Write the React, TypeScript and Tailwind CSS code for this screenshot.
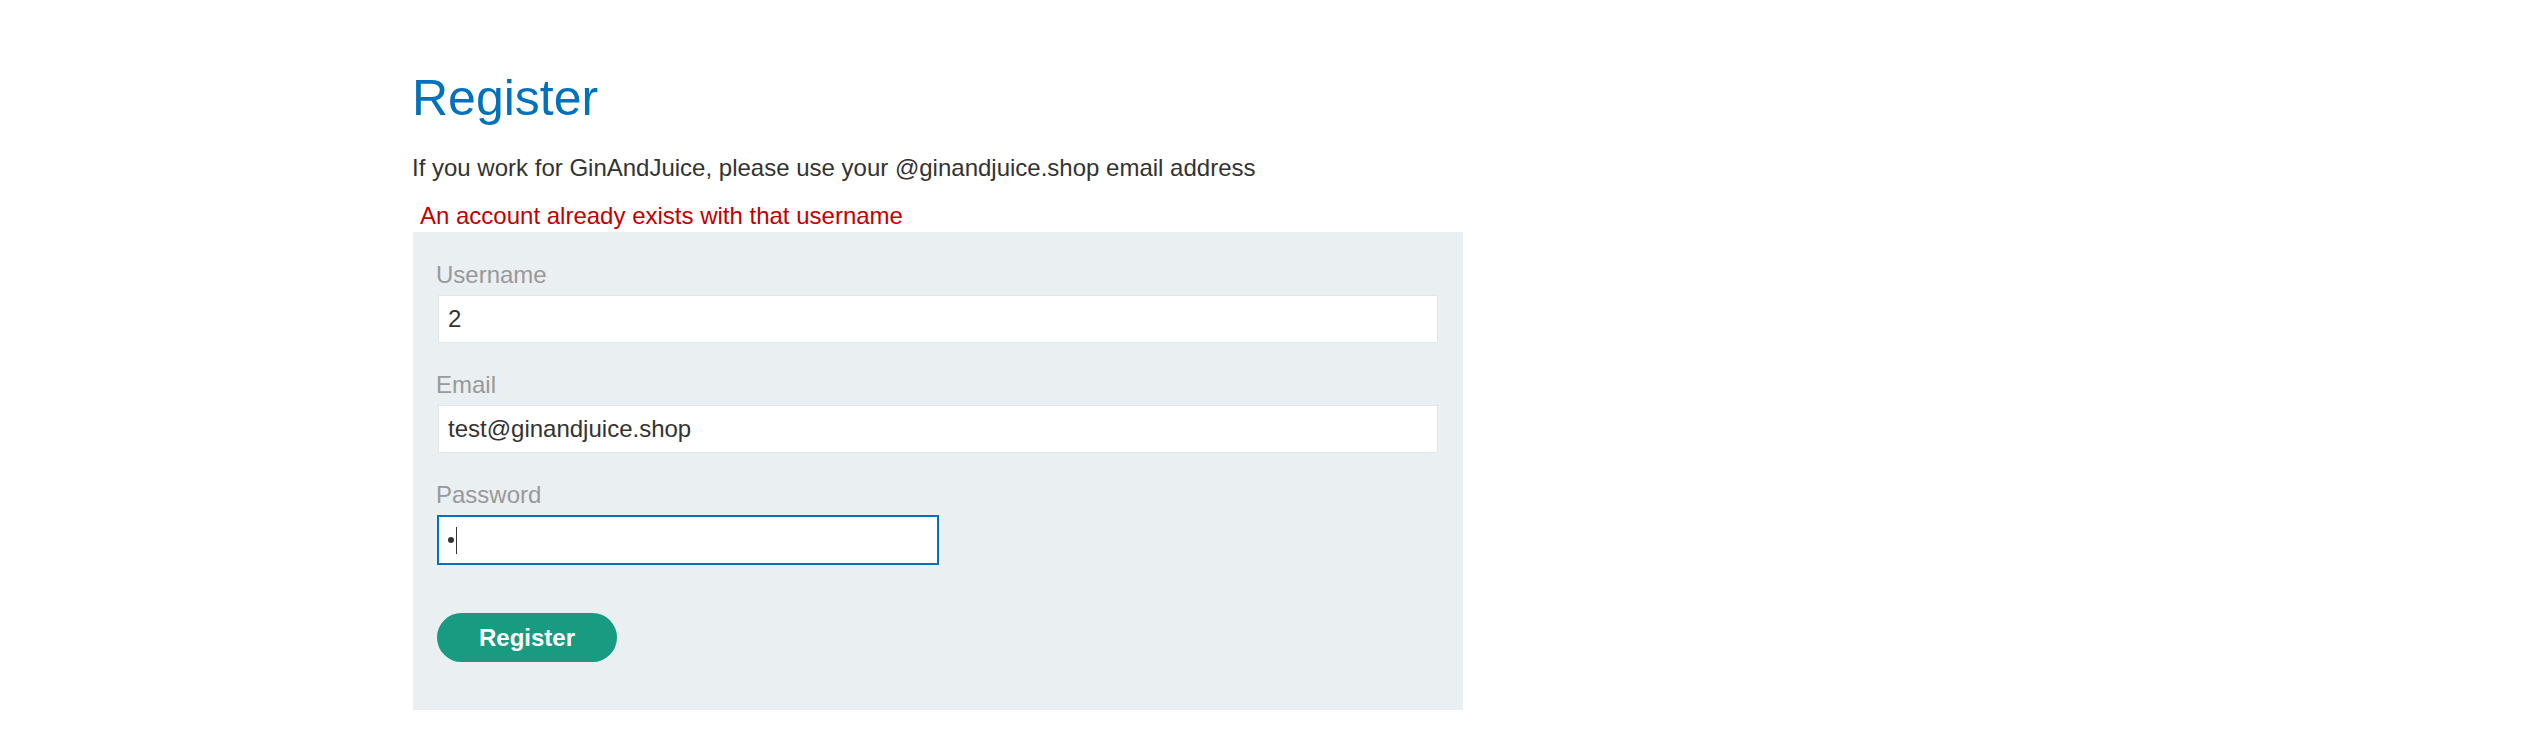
import React from 'react';

const font = { fontFamily: '"Liberation Sans", Arial, sans-serif' };

function Field({ label, value }: { label: string; value: string }) {
  return (
    <div>
      <label className="block text-[24px] leading-[30px] text-[#999999]">{label}</label>
      <div className="mt-[5px] ml-[2px] flex h-[48px] w-[1000px] items-center border border-[#e3e6e8] bg-white pl-[9px] text-[24px] text-[#333332]">
        {value}
      </div>
    </div>
  );
}

export default function App() {
  return (
    <div className="min-h-[755px] w-full bg-white" style={font}>
      <div className="mx-auto w-[1702px] pt-[70px]">
        {/* Heading */}
        <h1 className="text-[50px] leading-[56px] font-normal text-[#0071bc]">Register</h1>
        <p className="mt-[27px] text-[24px] leading-[30px] text-[#333332]">
          If you work for GinAndJuice, please use your @ginandjuice.shop email address
        </p>
        <p className="mt-[18px] ml-[8px] text-[24px] leading-[30px] text-[#c20000]">
          An account already exists with that username
        </p>

        {/* Form panel */}
        <form className="mt-[1px] ml-[1px] w-[1050px] bg-[#eaeff2] pt-[28px] pl-[23px] pb-[48px]">
          <div className="flex flex-col gap-[27px]">
            <Field label="Username" value="2" />
            <Field label="Email" value="test@ginandjuice.shop" />
            <div>
              <label className="block text-[24px] leading-[30px] text-[#999999]">Password</label>
              <div className="mt-[6px] ml-[2px] flex h-[48px] w-[500px] items-center border border-[#0071bc] bg-white pl-[9px] ring-1 ring-[#0071bc]">
                <span className="h-[6px] w-[6px] rounded-full bg-[#333332]" />
                <span className="ml-[2px] h-[27px] w-px bg-[#333332]" />
              </div>
            </div>
          </div>
          <button
            type="button"
            className="mt-[49px] ml-[1px] flex h-[49px] w-[180px] items-center justify-center rounded-full bg-[#189b80] text-[24px] font-bold text-white"
          >
            Register
          </button>
        </form>
      </div>
    </div>
  );
}
